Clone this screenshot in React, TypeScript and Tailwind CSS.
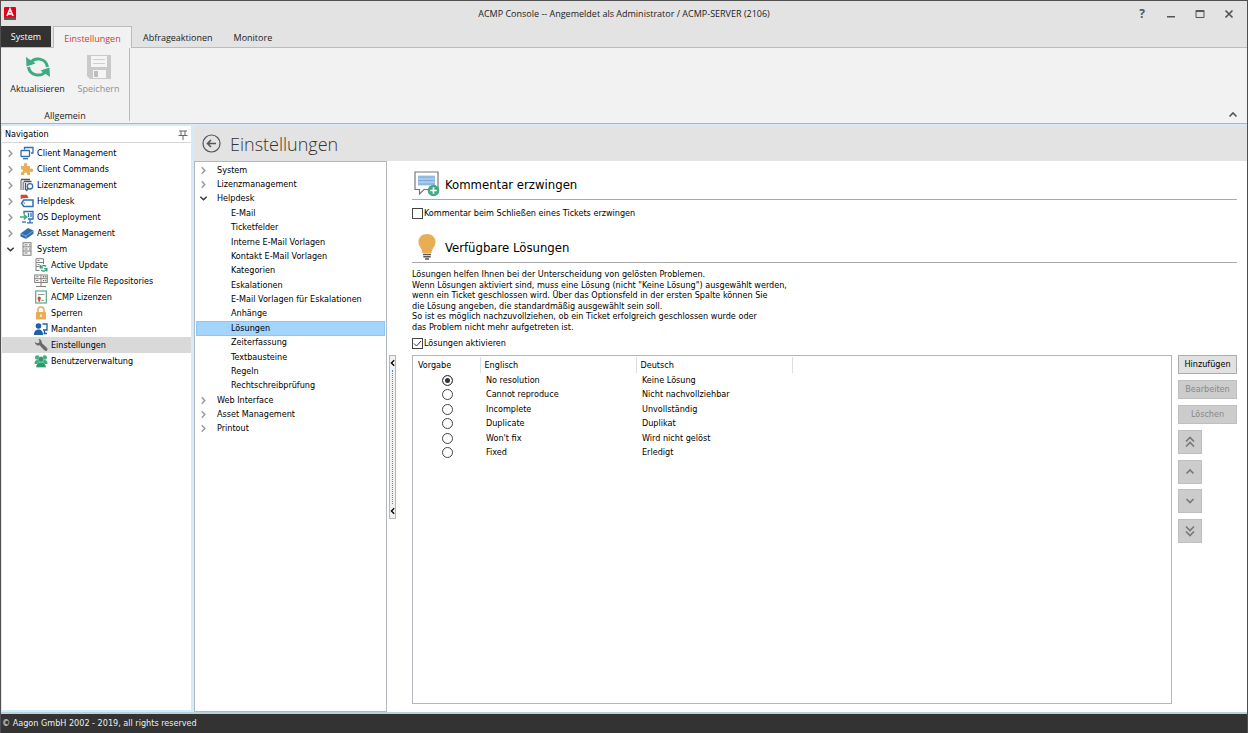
import { useState } from "react";
import type { ReactNode } from "react";

type TNavItem = {
  label: string;
  icon: ReactNode;
  open?: boolean;
  child?: boolean;
  active?: boolean;
};

type TTreeItem = {
  label: string;
  open?: boolean;
  child?: boolean;
};

type TChevronProps = {
  dir: "up" | "down" | "left" | "right";
  className?: string;
};

const chevronPaths = {
  up: "M1.5 6.5 5 3l3.5 3.5",
  down: "M1.5 3 5 6.5 8.5 3",
  left: "M6.5 1.5 3 5l3.5 3.5",
  right: "M3 1.5 6.5 5 3 8.5",
};

function Chevron({ dir, className }: TChevronProps) {
  return (
    <svg viewBox="0 0 10 10" className={className} fill="none" stroke="currentColor" strokeWidth="1.6">
      <path d={chevronPaths[dir]} />
    </svg>
  );
}

function DoubleChevron({ dir }: { dir: "up" | "down" }) {
  return (
    <svg viewBox="0 0 12 12" className="size-3" fill="none" stroke="currentColor" strokeWidth="1.6">
      {dir === "up" ? (
        <path d="m2 5.500 4-4 4 4M2 10.500l4-4 4 4" />
      ) : (
        <path d="m2 1.500 4 4 4-4M2 6.500l4 4 4-4" />
      )}
    </svg>
  );
}

function Icon({ children }: { children: ReactNode }) {
  return (
    <svg viewBox="0 0 14 14" className="size-[14px] shrink-0" fill="none">
      {children}
    </svg>
  );
}

const screensIcon = (
  <Icon>
    <path d="M4.500 3.500V1.500h8.500v5.500h-2" stroke="#2f6fb0" strokeWidth="1.300" />
    <rect x="1" y="4.500" width="8.500" height="6" rx=".5" fill="#fff" stroke="#2f6fb0" strokeWidth="1.300" />
    <path d="M3 12.700h5" stroke="#2f6fb0" strokeWidth="1.300" />
  </Icon>
);

const puzzleIcon = (
  <Icon>
    <path
      d="M1 4h3.200C3.400 2.600 3.900 1 5.600 1s2.200 1.600 1.400 3h3v3c1.200-1 3.200-.6 3.200 1.200S11.200 10.400 10 9.500V13H7c.7-1.400.2-2.500-1.300-2.500S3.500 11.600 4.200 13H1v-3c1 .5 1.900 0 1.900-1.200S2 7 1 7.500z"
      fill="#e9ae55"
    />
  </Icon>
);

const licenseIcon = (
  <Icon>
    <path d="M1 2v10M3.200 3.500V12" stroke="#777" strokeWidth="1.200" />
    <path d="M5.500 12V5M4 3.500h7.500M1 1.500h9" stroke="#555" strokeWidth="1.400" />
    <circle cx="10" cy="8.300" r="2.700" fill="#fff" stroke="#2f6fb0" strokeWidth="1.300" />
    <path d="m8.200 10.300-2 2.700" stroke="#2f6fb0" strokeWidth="1.600" />
  </Icon>
);

const helpdeskIcon = (
  <Icon>
    <path d="M.7 5V.8H7L8.500 4H4z" fill="#d8432c" />
    <path d="M3.800 6H13v6.500H3.800L1.500 9.300z" fill="#fff" stroke="#2f6fb0" strokeWidth="1.500" />
    <circle cx="4.200" cy="9.200" r=".7" fill="#2f6fb0" />
  </Icon>
);

const deployIcon = (
  <Icon>
    <path d="M4 4V1.500h9V9H8" stroke="#2f6fb0" strokeWidth="1.300" />
    <path d="M8.500 3v4M11 3v4M7 12.800h6M10 9v3.500" stroke="#2f6fb0" strokeWidth="1.300" />
    <path d="M0 7h6M3.800 4.500 6.500 7 3.800 9.500" stroke="#3fab80" strokeWidth="1.700" />
    <path d="M2 12h4" stroke="#2f6fb0" strokeWidth="1.300" />
  </Icon>
);

const assetIcon = (
  <Icon>
    <path d="m.5 7.500 7.500-5.500 5.500 2.500v3.200L6 13 .5 10.500z" fill="#2f6fb0" />
    <path d="m.8 7.800 5.200 2 7.300-5M6 9.800V13" stroke="#a9c8e6" strokeWidth=".6" />
  </Icon>
);

const serverIcon = (
  <Icon>
    <rect x="3" y=".7" width="8" height="12.600" stroke="#808080" fill="#f6f6f6" />
    <path d="M3 4.800h8M3 9h8M4.500 2.800h3M4.500 7h3M4.500 11h3" stroke="#808080" />
    <path d="M9 2.800h1M9 7h1" stroke="#d8432c" />
  </Icon>
);

const updateIcon = (
  <Icon>
    <path d="M2 13V.7h7.500V6M2 4.500h7.500M2 8.500h3.500M2 12.500h3.500" stroke="#808080" />
    <path d="M3.500 2.500h2M3.500 6.500h2" stroke="#808080" />
    <path
      d="M6.700 9.700a3 3 0 0 1 5.300-1M12.600 10.700a3 3 0 0 1-5.300 1.300M6.300 7v2.900h2.700M12.900 13.500v-2.900h-2.700"
      stroke="#2fa577"
      strokeWidth="1.300"
    />
  </Icon>
);

const repoIcon = (
  <Icon>
    <rect x=".7" y="1" width="12.600" height="7.500" stroke="#808080" />
    <path d="M.7 4.700h12.600M7 1v11M2 12.500h10M2 2.800h2.500M2 6.600h2.500" stroke="#808080" />
    <path d="M8.800 2.800h1.500M8.800 6.600h1.500" stroke="#d8432c" strokeWidth="1.400" />
    <path d="M11 2.800h1.500M11 6.600h1.500" stroke="#3fab80" strokeWidth="1.400" />
  </Icon>
);

const certificateIcon = (
  <Icon>
    <rect x="1.700" y="1" width="10.600" height="12" fill="#fff" stroke="#5ba68b" strokeWidth="1.200" />
    <path d="M4 4.500h6.500M7.500 10.500H10" stroke="#999" />
    <circle cx="5.200" cy="8.200" r="1.600" fill="#d8432c" />
    <path d="M5.200 9v2.700" stroke="#d8432c" strokeWidth="1.800" />
  </Icon>
);

const lockIcon = (
  <Icon>
    <path d="M4 7V4a3 3 0 0 1 6 0v3" stroke="#e9ae55" strokeWidth="1.600" />
    <rect x="2" y="6" width="10" height="7.500" rx=".6" fill="#e9ae55" />
    <path d="M7 8.500V11" stroke="#fff" strokeWidth="1.300" />
  </Icon>
);

const clientIcon = (
  <Icon>
    <circle cx="4.500" cy="4" r="2.800" fill="#1f5fa8" />
    <path d="M0 13c0-4 2-5.500 4.500-5.500S9 9 9 13z" fill="#1f5fa8" />
    <path d="M8.500 2H13v6H9M10.500 8v3M9.500 11.500H13" stroke="#1f5fa8" strokeWidth="1.300" />
  </Icon>
);

const wrenchIcon = (
  <Icon>
    <path
      d="M4.300 1C6.500.8 8.200 2.700 7.800 5l5 4.800c1 1 .9 2 .2 2.700s-1.800.8-2.700-.2l-4.800-5C3.200 7.800 1 6.500.8 4l2.300 1.300L5 4.800l.5-1.800z"
      fill="#6b6b6b"
    />
  </Icon>
);

const usersIcon = (
  <Icon>
    <circle cx="3.200" cy="3.500" r="2.200" fill="#3fab80" />
    <circle cx="10.800" cy="3.500" r="2.200" fill="#3fab80" />
    <path d="M.5 10c0-3 1-4 3-4h7c2 0 3 1 3 4z" fill="#3fab80" />
    <circle cx="7" cy="5.200" r="2.800" fill="#2a9a6e" stroke="#fff" strokeWidth=".3" />
    <path d="M2 13.500c0-3.500 2-5.300 5-5.300s5 1.800 5 5.300z" fill="#2a9a6e" stroke="#fff" strokeWidth=".3" />
  </Icon>
);

const navItems: TNavItem[] = [
  { label: "Client Management", icon: screensIcon },
  { label: "Client Commands", icon: puzzleIcon },
  { label: "Lizenzmanagement", icon: licenseIcon },
  { label: "Helpdesk", icon: helpdeskIcon },
  { label: "OS Deployment", icon: deployIcon },
  { label: "Asset Management", icon: assetIcon },
  { label: "System", icon: serverIcon, open: true },
  { label: "Active Update", icon: updateIcon, child: true },
  { label: "Verteilte File Repositories", icon: repoIcon, child: true },
  { label: "ACMP Lizenzen", icon: certificateIcon, child: true },
  { label: "Sperren", icon: lockIcon, child: true },
  { label: "Mandanten", icon: clientIcon, child: true },
  { label: "Einstellungen", icon: wrenchIcon, child: true, active: true },
  { label: "Benutzerverwaltung", icon: usersIcon, child: true },
];

const treeItems: TTreeItem[] = [
  { label: "System" },
  { label: "Lizenzmanagement" },
  { label: "Helpdesk", open: true },
  { label: "E-Mail", child: true },
  { label: "Ticketfelder", child: true },
  { label: "Interne E-Mail Vorlagen", child: true },
  { label: "Kontakt E-Mail Vorlagen", child: true },
  { label: "Kategorien", child: true },
  { label: "Eskalationen", child: true },
  { label: "E-Mail Vorlagen für Eskalationen", child: true },
  { label: "Anhänge", child: true },
  { label: "Lösungen", child: true },
  { label: "Zeiterfassung", child: true },
  { label: "Textbausteine", child: true },
  { label: "Regeln", child: true },
  { label: "Rechtschreibprüfung", child: true },
  { label: "Web Interface" },
  { label: "Asset Management" },
  { label: "Printout" },
];

const resolutions = [
  ["No resolution", "Keine Lösung"],
  ["Cannot reproduce", "Nicht nachvollziehbar"],
  ["Incomplete", "Unvollständig"],
  ["Duplicate", "Duplikat"],
  ["Won't fix", "Wird nicht gelöst"],
  ["Fixed", "Erledigt"],
];

const description = [
  "Lösungen helfen Ihnen bei der Unterscheidung von gelösten Problemen.",
  "Wenn Lösungen aktiviert sind, muss eine Lösung (nicht \"Keine Lösung\") ausgewählt werden,",
  "wenn ein Ticket geschlossen wird. Über das Optionsfeld in der ersten Spalte können Sie",
  "die Lösung angeben, die standardmäßig ausgewählt sein soll.",
  "So ist es möglich nachzuvollziehen, ob ein Ticket erfolgreich geschlossen wurde oder",
  "das Problem nicht mehr aufgetreten ist.",
];

function TitleBar() {
  return (
    <header className="grid h-[25px] shrink-0 grid-cols-[1fr_auto_1fr] items-center bg-[#e3e3e3] font-['Open_Sans','Noto_Sans',sans-serif] text-[#222]">
      <svg viewBox="0 0 12 13" className="ml-[3px] h-[13px] w-3">
        <rect width="12" height="13" rx="1" fill="#e2001a" />
        <path d="M0 10.500h12V12a1 1 0 0 1-1 1H1a1 1 0 0 1-1-1z" fill="#5c5c5c" />
        <path d="m3 9 3-7 3 7M4 6.800h4" fill="none" stroke="#fff" strokeWidth="1.700" />
      </svg>
      <h1>ACMP Console -- Angemeldet als Administrator / ACMP-SERVER (2106)</h1>
      <div className="flex justify-end gap-[15px] pr-[11px] text-[#555]">
        <button className="w-[14px] text-xs leading-[14px] font-bold">?</button>
        <button aria-label="Minimieren" className="flex w-[14px] items-center justify-center">
          <svg viewBox="0 0 10 10" className="size-[10px]">
            <path d="M1 7h8v1.500H1z" fill="currentColor" />
          </svg>
        </button>
        <button aria-label="Maximieren" className="flex w-[14px] items-center justify-center">
          <svg viewBox="0 0 10 10" className="size-[10px]" fill="none" stroke="currentColor">
            <path d="M1 1.500h8v7H1zM1 2.500h8" />
          </svg>
        </button>
        <button aria-label="Schließen" className="flex w-[14px] items-center justify-center">
          <svg viewBox="0 0 10 10" className="size-[10px]" stroke="currentColor" strokeWidth="1.700">
            <path d="m1.500 1.500 7 7m0-7-7 7" />
          </svg>
        </button>
      </div>
    </header>
  );
}

function Ribbon() {
  return (
    <div className="shrink-0 font-['Open_Sans','Noto_Sans',sans-serif] text-[#222]">
      <nav className="flex h-[22px] items-stretch border-b border-[#bcbcbc] bg-[#e3e3e3]">
        <button className="w-[50px] bg-[#323232] text-white">System</button>
        <button className="-mb-px ml-[2px] w-[79px] border border-b-0 border-[#bcbcbc] bg-[#f2f2f2] pt-px text-[#d0402b]">
          Einstellungen
        </button>
        <button className="ml-[11px] pt-[2px]">Abfrageaktionen</button>
        <button className="ml-[21px] pt-[2px]">Monitore</button>
      </nav>
      <div className="flex h-[76px] items-start justify-between border-b border-[#a9b6bd] bg-[#f2f2f2]">
        <div className="flex h-[73px] flex-col justify-between border-r border-[#bcbcbc]">
          <div className="flex pt-[6px]">
            <button className="flex w-[73px] flex-col items-center gap-[2px]">
              <svg viewBox="0 0 26 26" className="size-[26px]" fill="none">
                <path
                  d="M5 9.500A9.500 9.500 0 0 1 22.500 13M21 16.500A9.500 9.500 0 0 1 3.500 13"
                  stroke="#3fab80"
                  strokeWidth="3"
                />
                <path d="m1 3 .5 9.500 9-3zM25 23l-.5-9.500-9 3z" fill="#3fab80" />
              </svg>
              <span className="leading-[14px]">Aktualisieren</span>
            </button>
            <button disabled className="mr-[6px] flex w-[49px] flex-col items-center gap-[2px] text-[#8f8f8f]">
              <svg viewBox="0 0 26 26" className="size-[26px]" fill="none">
                <path d="M1 1h24v24H4l-3-3z" fill="#c9c9c9" />
                <path d="M5 2h16v11H5zM7 16h13v8H7z" fill="#f5f5f5" />
                <path d="M7 5.500h12M7 9.500h12" stroke="#cfcfcf" />
                <path d="M8 17h4v6H8z" fill="#bdbdbd" />
              </svg>
              <span className="leading-[14px]">Speichern</span>
            </button>
          </div>
          <span className="text-center leading-[10px]">Allgemein</span>
        </div>
        <button aria-label="Menüband reduzieren" className="mt-[62px] mr-[9px] text-[#555]">
          <Chevron dir="up" className="size-[10px]" />
        </button>
      </div>
    </div>
  );
}

function Navigation() {
  return (
    <aside className="my-[2px] ml-px w-[189px] shrink-0 bg-white">
      <div className="flex h-[17px] items-center justify-between border-b border-[#d5d5d5] px-[3px] pt-px">
        <h2>Navigation</h2>
        <button aria-label="Anheften" className="text-[#666]">
          <svg viewBox="0 0 10 10" className="size-[10px]" fill="none" stroke="currentColor">
            <path d="M1 1h8M3 1v4.500h4V1M.5 5.500h9M5 6v4" />
          </svg>
        </button>
      </div>
      <ul className="pt-[2px]">
        {navItems.map((item) => (
          <li key={item.label}>
            <button
              className={`flex h-4 w-full items-center gap-[3px] ${item.child ? "pl-8" : "pl-1"} ${
                item.active ? "bg-[#d9d9d9]" : ""
              }`}
            >
              {item.child ? null : (
                <Chevron
                  dir={item.open ? "down" : "right"}
                  className={`mr-[2px] size-[9px] ${item.open ? "text-[#333]" : "text-[#999]"}`}
                />
              )}
              {item.icon}
              {item.label}
            </button>
          </li>
        ))}
      </ul>
    </aside>
  );
}

function SettingsTree() {
  const [selected, setSelected] = useState("Lösungen");

  return (
    <div className="w-[193px] shrink-0 border border-[#b3b8bd] bg-white px-px pt-px">
      <ul className="flex h-[273px] flex-col">
        {treeItems.map((item) => (
          <li key={item.label} className="flex min-h-0 flex-1">
            <button
              onClick={() => setSelected(item.label)}
              className={`flex w-full items-center border ${item.child ? "pl-[34px]" : "pl-[2px]"} ${
                selected === item.label ? "border-[#8bc7f5] bg-[#a3d5ff]" : "border-transparent"
              }`}
            >
              {item.child ? null : (
                <Chevron
                  dir={item.open ? "down" : "right"}
                  className={`mr-[9px] size-[9px] ${item.open ? "text-[#333]" : "text-[#999]"}`}
                />
              )}
              {item.label}
            </button>
          </li>
        ))}
      </ul>
    </div>
  );
}

type TCheckboxProps = {
  id: string;
  label: string;
  defaultChecked?: boolean;
};

function Checkbox({ id, label, defaultChecked }: TCheckboxProps) {
  return (
    <div className="relative flex h-3 items-center gap-px">
      <input
        id={id}
        type="checkbox"
        defaultChecked={defaultChecked}
        className="peer size-[11px] appearance-none border border-[#444] bg-white"
      />
      <label htmlFor={id}>{label}</label>
      <svg
        viewBox="0 0 11 11"
        className="pointer-events-none absolute left-0 hidden size-[11px] peer-checked:block"
        fill="none"
        stroke="#333"
      >
        <path d="m2 5.500 2.500 2.500L9 3" />
      </svg>
    </div>
  );
}

function SectionTitle({ icon, children }: { icon: ReactNode; children: ReactNode }) {
  return (
    <div className="flex h-[31px] items-center gap-[5px] border-b border-[#aaa] pl-[2px]">
      {icon}
      <h3 className="text-[13px]">{children}</h3>
    </div>
  );
}

function ResolutionTable() {
  const [preset, setPreset] = useState(0);

  return (
    <div className="min-w-0 flex-1 border border-[#b3b8bd] bg-white pt-px">
      <table className="w-full table-fixed border-collapse text-left">
        <colgroup>
          <col className="w-[67px]" />
          <col className="w-[156px]" />
          <col className="w-[156px]" />
          <col />
        </colgroup>
        <thead>
          <tr className="h-4">
            <th className="border-r border-[#ddd] p-0 pl-[5px] font-normal">Vorgabe</th>
            <th className="border-r border-[#ddd] p-0 pl-1 font-normal">Englisch</th>
            <th className="border-r border-[#ddd] p-0 pl-1 font-normal">Deutsch</th>
            <td />
          </tr>
        </thead>
        <tbody>
          {resolutions.map(([english, german], i) => (
            <tr key={english} className="h-[14px] even:h-[15px]">
              <td className="p-0">
                <input
                  type="radio"
                  name="preset"
                  aria-label={english}
                  checked={preset === i}
                  onChange={() => setPreset(i)}
                  className="ml-[29px] block size-[11px] appearance-none rounded-full border border-[#444] bg-white checked:bg-[#333] checked:shadow-[inset_0_0_0_2px_#fff]"
                />
              </td>
              <td className="p-0 pl-[6px]">{english}</td>
              <td className="p-0 pl-[6px]">{german}</td>
              <td />
            </tr>
          ))}
        </tbody>
      </table>
    </div>
  );
}

function TableActions() {
  return (
    <div className="flex w-[59px] shrink-0 flex-col gap-[6px] text-[#888]">
      <button className="h-[19px] border border-[#adadad] bg-[#e1e1e1] text-black">Hinzufügen</button>
      <button disabled className="h-[19px] border border-[#bfbfbf] bg-[#ccc]">
        Bearbeiten
      </button>
      <button disabled className="h-[19px] border border-[#bfbfbf] bg-[#ccc]">
        Löschen
      </button>
      <div className="flex h-[113px] flex-col justify-between text-[#777]">
        <button disabled aria-label="Ganz nach oben" className="flex size-6 items-center justify-center border border-[#bfbfbf] bg-[#ccc]">
          <DoubleChevron dir="up" />
        </button>
        <button disabled aria-label="Nach oben" className="flex size-6 items-center justify-center border border-[#bfbfbf] bg-[#ccc]">
          <Chevron dir="up" className="size-[10px]" />
        </button>
        <button disabled aria-label="Nach unten" className="flex size-6 items-center justify-center border border-[#bfbfbf] bg-[#ccc]">
          <Chevron dir="down" className="size-[10px]" />
        </button>
        <button disabled aria-label="Ganz nach unten" className="flex size-6 items-center justify-center border border-[#bfbfbf] bg-[#ccc]">
          <DoubleChevron dir="down" />
        </button>
      </div>
    </div>
  );
}

function Splitter() {
  return (
    <button
      aria-label="Baum ausblenden"
      className="ml-[2px] flex h-[164px] w-[7px] shrink-0 flex-col items-center self-center border border-[#b5b5b5] bg-[#f2f2f2] py-[3px] text-black"
    >
      <Chevron dir="left" className="size-[8px]" />
      <span className="my-[3px] flex-1 border-l border-dotted border-[#4a90c8]" />
      <Chevron dir="left" className="size-[8px]" />
    </button>
  );
}

const commentIcon = (
  <svg viewBox="0 0 26 26" className="size-[26px] shrink-0" fill="none">
    <path d="M1 1h23v17.500H10L5.500 23v-4.500H1z" fill="#fff" stroke="#777" strokeWidth="1.200" />
    <path d="M4 4.500h17v10H4z" fill="#a9c9ea" />
    <path d="M4 6h17M4 9.500h17M4 13h17" stroke="#79a9d9" />
    <circle cx="19.500" cy="19.500" r="5.800" fill="#3fab80" />
    <path d="M19.500 16.200v6.600M16.200 19.500h6.600" stroke="#fff" strokeWidth="1.700" />
  </svg>
);

const bulbIcon = (
  <svg viewBox="0 0 26 26" className="size-[26px] shrink-0" fill="none">
    <path d="M13 0c5 0 8.500 3.500 8.500 8 0 4.500-3.500 6-4 11h-9c-.5-5-4-6.500-4-11C4.500 3.500 8 0 13 0z" fill="#e9ae55" />
    <path d="M9 20.500h8M9.300 22.800h7.400M11 25h4" stroke="#555" strokeWidth="1.400" />
  </svg>
);

function App() {
  return (
    <div className="flex h-screen flex-col border-x border-t border-[#4f4f4f] bg-white font-['DejaVu_Sans_Condensed','DejaVu_Sans',sans-serif] text-[9px] leading-[11px] text-black">
      <TitleBar />
      <Ribbon />
      <div className="flex min-h-0 flex-1 border-b-2 border-[#b9d3dc] bg-[#d3ebfb]">
        <Navigation />
        <main className="mt-[2px] ml-[3px] flex min-w-0 flex-1 flex-col bg-white">
          <div className="flex h-[35px] shrink-0 items-center gap-[9px] bg-[#e3e3e3] pl-[8px]">
            <button aria-label="Zurück">
              <svg viewBox="0 0 19 19" className="size-[19px]" fill="none" stroke="#555">
                <circle cx="9.500" cy="9.500" r="8.500" strokeWidth="1.200" />
                <path d="M14 9.500H5.500M9 6 5.500 9.500 9 13" strokeWidth="1.600" />
              </svg>
            </button>
            <h2 className="font-['Open_Sans','Noto_Sans',sans-serif] text-[18px] leading-6 font-light text-[#333]">
              Einstellungen
            </h2>
          </div>
          <div className="flex min-h-0 flex-1">
            <SettingsTree />
            <Splitter />
            <section className="mr-[10px] ml-[16px] flex min-w-0 flex-1 flex-col pt-2 pb-2">
              <SectionTitle icon={commentIcon}>Kommentar erzwingen</SectionTitle>
              <div className="mt-[7px] mb-[13px]">
                <Checkbox id="force-comment" label="Kommentar beim Schließen eines Tickets erzwingen" />
              </div>
              <SectionTitle icon={bulbIcon}>Verfügbare Lösungen</SectionTitle>
              <div className="mt-[6px] mb-[5px] flex h-[63px] flex-col justify-between">
                {description.map((line) => (
                  <p key={line} className="leading-[10px]">
                    {line}
                  </p>
                ))}
              </div>
              <Checkbox id="enable-resolutions" label="Lösungen aktivieren" defaultChecked />
              <div className="mt-[6px] flex min-h-0 flex-1 gap-[6px]">
                <ResolutionTable />
                <TableActions />
              </div>
            </section>
          </div>
        </main>
      </div>
      <footer className="flex h-[19px] shrink-0 items-center bg-[#333] pl-px text-[#eee]">
        © Aagon GmbH 2002 - 2019, all rights reserved
      </footer>
    </div>
  );
}

export default App;
